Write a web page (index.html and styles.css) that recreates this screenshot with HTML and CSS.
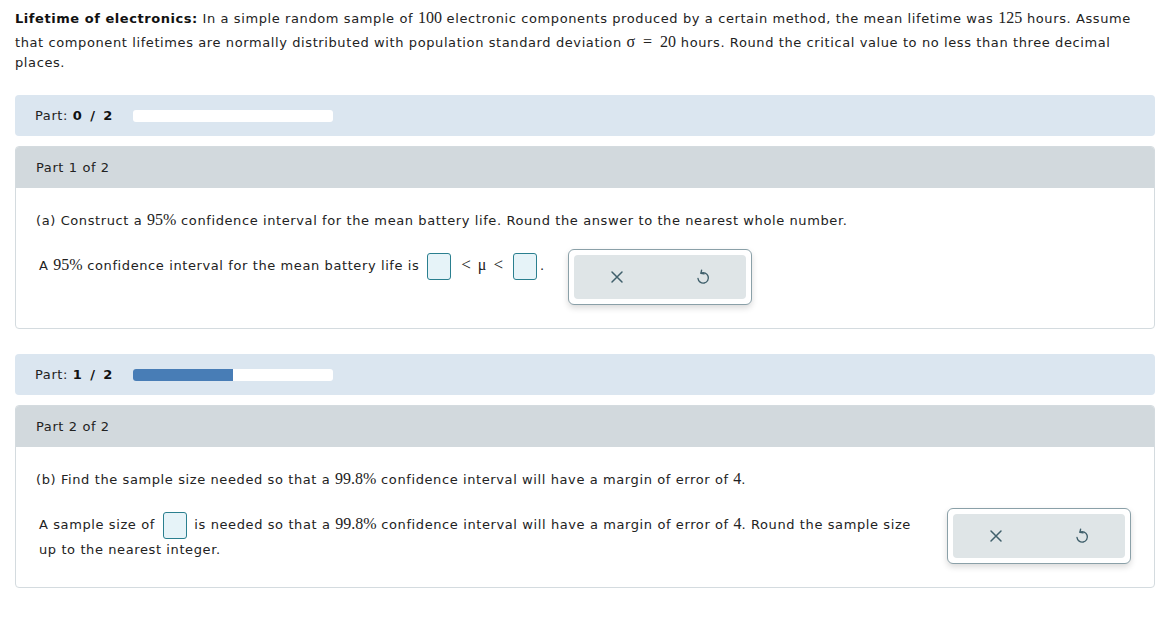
FILE: index.html
```html
<!DOCTYPE html>
<html>
<head>
<meta charset="utf-8">
<link rel="stylesheet" href="styles.css">
</head>
<body>
<div class="page">
  <p class="intro"><b>Lifetime of electronics:</b> In a simple random sample of <span class="m">100</span> electronic components produced by a certain method, the mean lifetime was <span class="m">125</span> hours. Assume that component lifetimes are normally distributed with population standard deviation <span class="m tall">σ&nbsp; =&nbsp; 20</span> hours. Round the critical value to no less than three decimal places.</p>

  <div class="partbar">
    <span class="plabel">Part: <b>0 / 2</b></span>
    <span class="progress"><span class="fill" style="width:0%"></span></span>
  </div>

  <div class="panel">
    <div class="phead">Part 1 of 2</div>
    <div class="pbody">
      <p class="q">(a) Construct a <span class="m">95%</span> confidence interval for the mean battery life. Round the answer to the nearest whole number.</p>
      <div class="ansrow">
        <div class="anstext">A <span class="m">95%</span> confidence interval for the mean battery life is <span class="box"></span><span class="m rel">&lt;</span><span class="m">μ</span><span class="m rel">&lt;</span><span class="box"></span>.</div>
        <div class="btngroup">
          <div class="btninner">
            <span class="btn"><svg class="ico" viewBox="0 0 16 16" width="16" height="16"><path d="M3 3 L13 13 M13 3 L3 13" stroke="#3f5f6b" stroke-width="1.5" fill="none" stroke-linecap="round"/></svg></span>
            <span class="btn"><svg class="ico" viewBox="0 0 16 16" width="16" height="16"><path d="M6 4.2 A5.2 5.2 0 1 1 3 9.5" stroke="#3f5f6b" stroke-width="1.4" fill="none" stroke-linecap="round"/><path d="M6.6 1.2 L6 4.2 L9 4.9" stroke="#3f5f6b" stroke-width="1.4" fill="none" stroke-linecap="round" stroke-linejoin="round"/></svg></span>
          </div>
        </div>
      </div>
    </div>
  </div>

  <div class="partbar">
    <span class="plabel">Part: <b>1 / 2</b></span>
    <span class="progress"><span class="fill" style="width:50%"></span></span>
  </div>

  <div class="panel">
    <div class="phead">Part 2 of 2</div>
    <div class="pbody">
      <p class="q">(b) Find the sample size needed so that a <span class="m">99.8%</span> confidence interval will have a margin of error of <span class="m">4</span>.</p>
      <div class="ansrow">
        <div class="anstext wide">A sample size of <span class="box"></span> is needed so that a <span class="m">99.8%</span> confidence interval will have a margin of error of <span class="m">4</span>. Round the sample size up to the nearest integer.</div>
        <div class="btngroup">
          <div class="btninner">
            <span class="btn"><svg class="ico" viewBox="0 0 16 16" width="16" height="16"><path d="M3 3 L13 13 M13 3 L3 13" stroke="#3f5f6b" stroke-width="1.5" fill="none" stroke-linecap="round"/></svg></span>
            <span class="btn"><svg class="ico" viewBox="0 0 16 16" width="16" height="16"><path d="M6 4.2 A5.2 5.2 0 1 1 3 9.5" stroke="#3f5f6b" stroke-width="1.4" fill="none" stroke-linecap="round"/><path d="M6.6 1.2 L6 4.2 L9 4.9" stroke="#3f5f6b" stroke-width="1.4" fill="none" stroke-linecap="round" stroke-linejoin="round"/></svg></span>
          </div>
        </div>
      </div>
    </div>
  </div>
</div>
</body>
</html>
```

FILE: styles.css
```css
html, body {
  margin: 0;
  padding: 0;
  background: #ffffff;
}
body {
  font-family: "DejaVu Sans", Verdana, sans-serif;
  font-size: 13px;
  letter-spacing: 0.6px;
  color: #222;
}
b {
  font-weight: bold;
  letter-spacing: 0.55px;
  color: #111;
}
.page {
  width: 1140px;
  padding: 8px 0 0 15px;
}
.intro {
  margin: 0 0 22px 0;
  line-height: 20px;
}
.m {
  font-family: "Liberation Serif", "Times New Roman", serif;
  font-size: 16px;
  letter-spacing: 0;
}
.m.tall {
  display: inline-block;
  padding-top: 3px;
}
.m.rel {
  display: inline-block;
  font-size: 17px;
  margin: 0 7px;
}
.partbar {
  display: flex;
  align-items: center;
  gap: 20px;
  height: 41px;
  padding-left: 20px;
  background: #dbe6f0;
  border-radius: 4px;
  margin-bottom: 10px;
}
.plabel b {
  letter-spacing: 0.9px;
  word-spacing: 2px;
}
.progress {
  display: block;
  width: 200px;
  height: 12px;
  background: #ffffff;
  border-radius: 3px;
  overflow: hidden;
}
.fill {
  display: block;
  height: 100%;
  background: #487db6;
}
.panel {
  border: 1px solid #d4dbdf;
  border-radius: 4px;
  margin-bottom: 25px;
  overflow: hidden;
}
.phead {
  background: #d2d9dd;
  height: 41px;
  display: flex;
  align-items: center;
  padding-left: 20px;
}
.pbody {
  padding: 23px 23px 23px 20px;
}
.q {
  margin: 0 0 19px 0;
  line-height: 18px;
}
.ansrow {
  display: flex;
  align-items: flex-start;
  gap: 23px;
}
.anstext {
  flex: 0 1 auto;
  padding-left: 3px;
  padding-top: 3px;
  line-height: 25px;
}
.box {
  display: inline-block;
  box-sizing: border-box;
  width: 24px;
  height: 27px;
  vertical-align: middle;
  background: #e6f3f8;
  border: 1px solid #2a7f8f;
  border-radius: 3px;
  margin: -2px 3px;
}
.btngroup {
  flex: 0 0 auto;
  width: 172px;
  padding: 5px;
  border: 1px solid #8aa0a8;
  border-radius: 6px;
  background: #fff;
  box-shadow: 0 3px 6px rgba(0, 0, 0, 0.15);
}
.btninner {
  height: 44px;
  background: #dfe5e7;
  border-radius: 4px;
  display: flex;
  align-items: center;
}
.btn {
  flex: 1;
  display: flex;
  justify-content: center;
}
.ico {
  display: block;
}
```
